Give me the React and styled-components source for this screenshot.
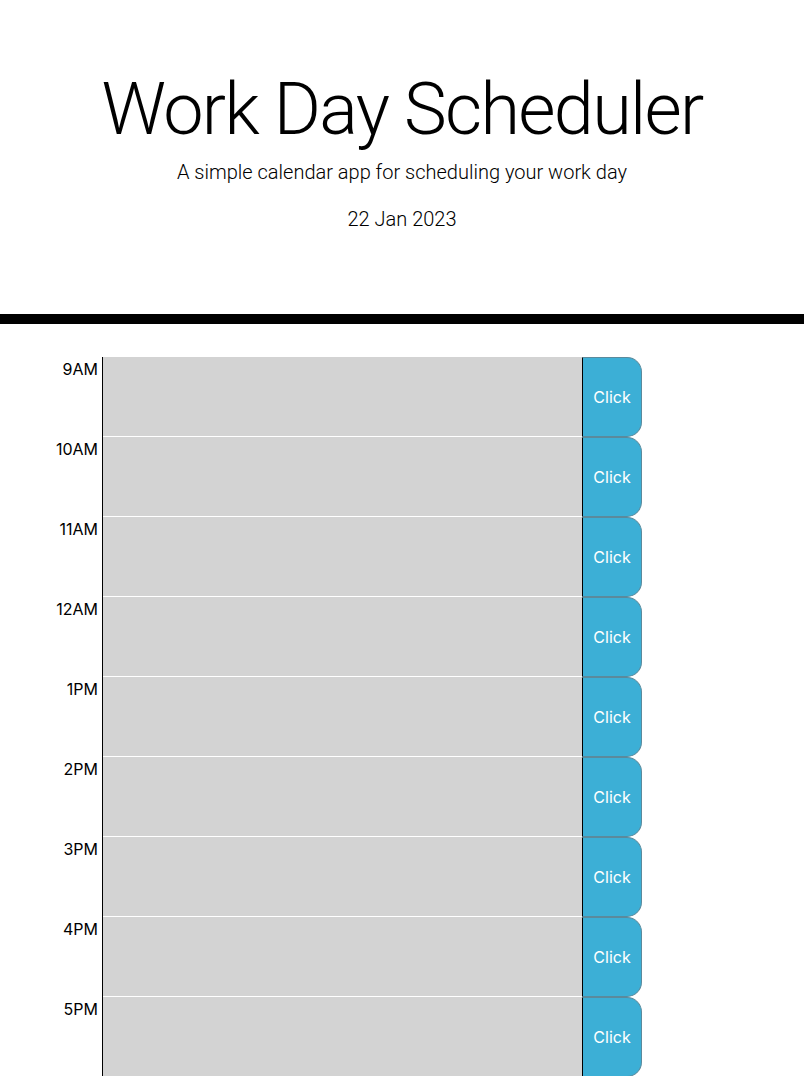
import React from "react";
import styled, { createGlobalStyle } from "styled-components";

const GlobalStyle = createGlobalStyle`
  * { box-sizing: border-box; }
  body {
    margin: 0;
    background: #ffffff;
    color: #000000;
    font-family: "Inter", "Liberation Sans", sans-serif;
    font-size: 16px;
    line-height: 1.5;
  }
`;

const hours = ["9AM", "10AM", "11AM", "12AM", "1PM", "2PM", "3PM", "4PM", "5PM"];

export default function App() {
  return (
    <>
      <GlobalStyle />
      <Jumbotron>
        <Title>Work Day Scheduler</Title>
        <Lead>A simple calendar app for scheduling your work day</Lead>
        <CurrentDay>22 Jan 2023</CurrentDay>
      </Jumbotron>
      <Container>
        {hours.map((hour) => (
          <TimeBlock key={hour}>
            <Hour>{hour}</Hour>
            <Description />
            <SaveBtn>Click</SaveBtn>
          </TimeBlock>
        ))}
      </Container>
    </>
  );
}

const Jumbotron = styled.header`
  display: flex;
  flex-direction: column;
  align-items: center;
  height: 324px;
  padding-top: 67px;
  border-bottom: 10px solid #000000;
  margin-bottom: 33px;
  text-align: center;
  font-family: "Roboto", "Inter", sans-serif;
`;

const Title = styled.h1`
  margin: 0;
  font-size: 72px;
  font-weight: 300;
  line-height: 1.2;
  letter-spacing: -1.7px;
`;

const Lead = styled.p`
  margin: 4px 0 0;
  font-size: 20px;
  font-weight: 300;
  line-height: 1.5;
`;

const CurrentDay = styled.p`
  margin: 17px 0 0;
  font-size: 20px;
  font-weight: 300;
  line-height: 1.5;
`;

const Container = styled.main`
  width: 720px;
  margin: 0 auto;
`;

const TimeBlock = styled.section`
  display: grid;
  grid-template-columns: 61px 479px 60px;
  height: 80px;
`;

const Hour = styled.div`
  padding-right: 4px;
  border-right: 1px solid #000000;
  text-align: right;
  font-size: 16px;
  line-height: 24px;
`;

const Description = styled.textarea`
  margin: 0;
  padding: 8px;
  border: none;
  border-bottom: 1px solid #ffffff;
  background: #d3d3d3;
  resize: none;
  font: inherit;
  outline: none;
`;

const SaveBtn = styled.button`
  display: flex;
  align-items: center;
  justify-content: center;
  margin: 0;
  padding: 0;
  border: 1px solid #5b8a9c;
  border-left: 1px solid #000000;
  border-radius: 0 15px 15px 0;
  background: #3cafd6;
  color: #ffffff;
  font-family: "Inter", "Liberation Sans", sans-serif;
  font-size: 16px;
`;
